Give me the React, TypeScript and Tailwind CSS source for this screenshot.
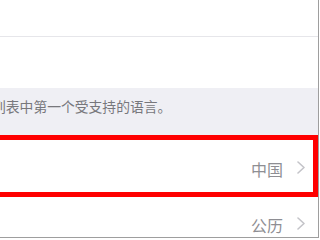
import React from "react";

const Chevron = () => (
  <svg width="8" height="13" viewBox="0 0 8 13" fill="none" className="shrink-0">
    <path d="M1 1l6 5.5L1 12" stroke="#c4c4c9" strokeWidth="1.6" strokeLinecap="round" strokeLinejoin="round" />
  </svg>
);

const Row = ({ value }: { value: string }) => (
  <div className="h-[55px] bg-white flex items-center justify-end pr-[13px]">
    <span className="text-[16px] leading-none text-[#8e8e93] mr-[14px] mt-[3px]">{value}</span>
    <Chevron />
  </div>
);

export default function App() {
  return (
    <div
      className="w-[320px] h-[240px] bg-white overflow-hidden relative"
      style={{ fontFamily: '"Noto Sans CJK SC", "Noto Sans", sans-serif' }}
    >
      <div className="w-[319px] h-[238px] border-r border-b border-[#9e9e9e]">
        <div className="w-[318px] h-[237px] overflow-hidden flex flex-col">
          <div className="h-[36px] shrink-0 bg-white" />
          <div className="h-px shrink-0 bg-[#e6e6ea]" />
          <div className="h-[51px] shrink-0 bg-white" />
          <div className="h-[52px] shrink-0 bg-[#efeff4] pt-[9px]">
            <p className="ml-[-8px] text-[13.8px] leading-[18px] text-[#77777c] whitespace-nowrap">
              列表中第一个受支持的语言。
            </p>
          </div>
          <div className="shrink-0">
            <Row value="中国" />
          </div>
          <div className="h-px shrink-0 bg-[#e0e0e4]" />
          <div className="shrink-0">
            <Row value="公历" />
          </div>
        </div>
      </div>
      <div className="absolute top-[135px] left-[-10px] w-[328px] h-[62px] border-[5px] border-[#ff0000]" />
    </div>
  );
}
